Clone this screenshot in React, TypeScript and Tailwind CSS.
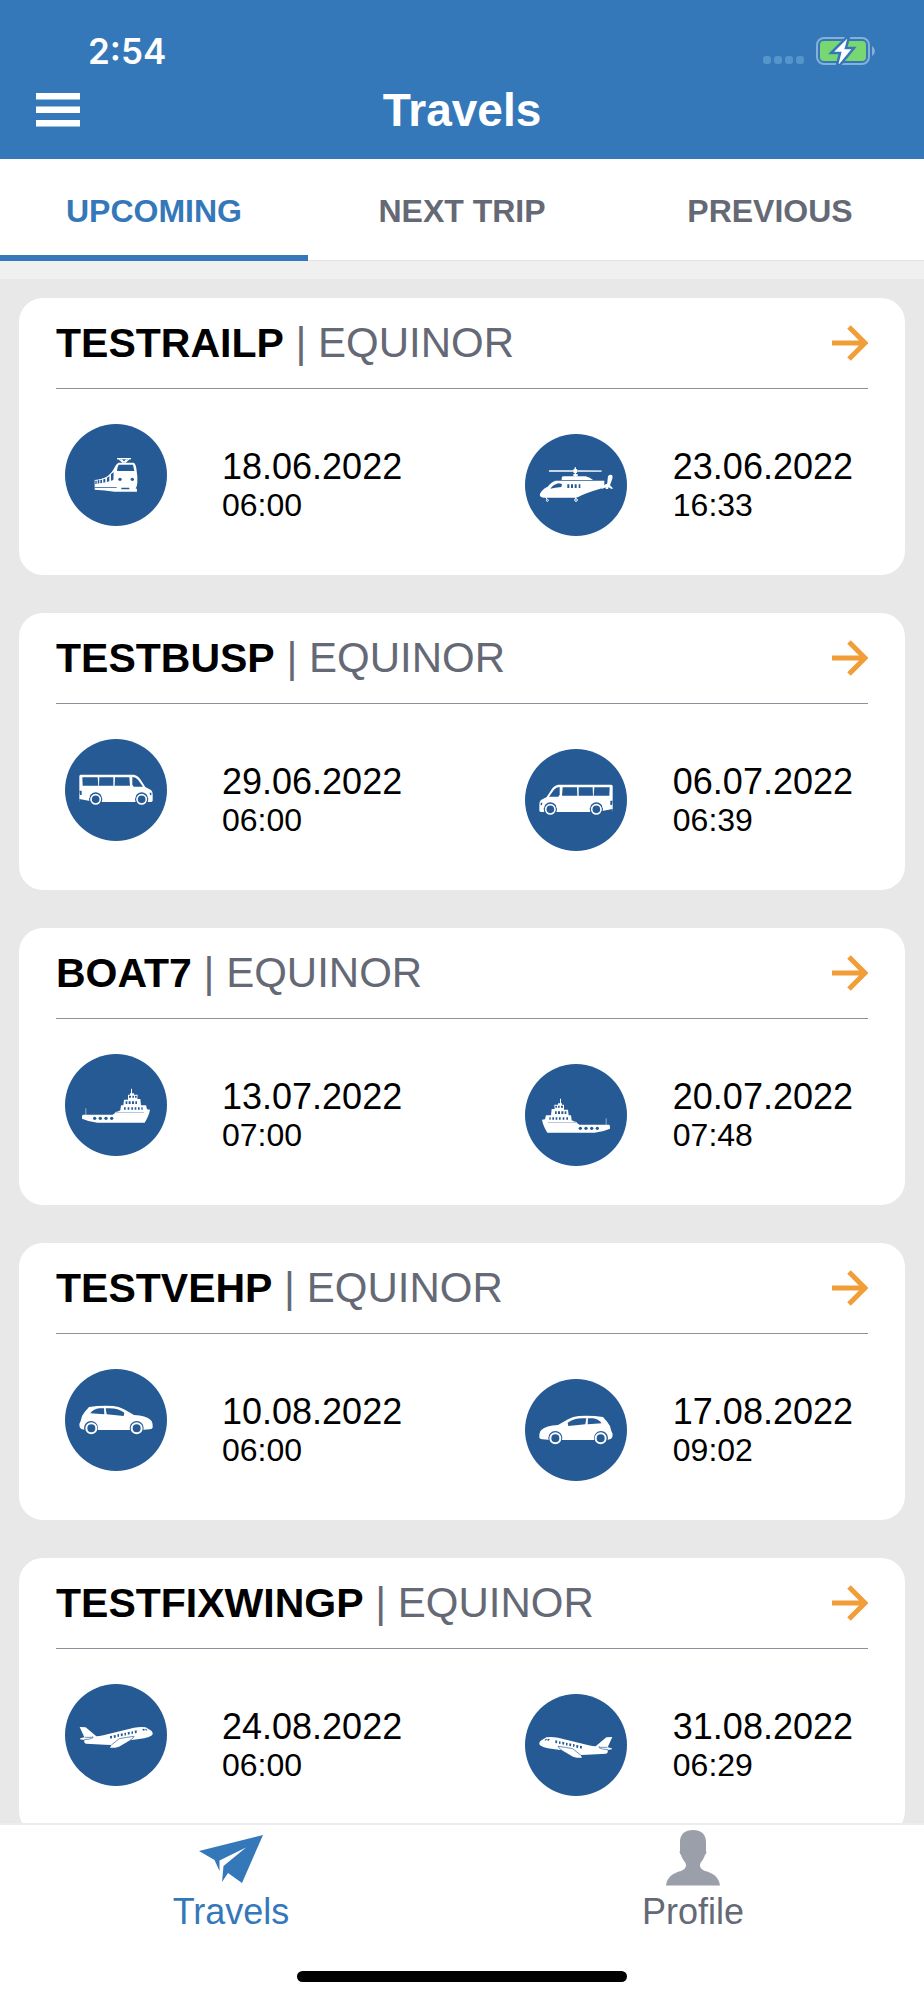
import React from "react";

type IconProps = { className?: string };

const TrainIcon = ({ className }: IconProps) => (
  <svg viewBox="45 42 306 306" className={className} aria-hidden="true">
    <g fill="none" stroke="#fff" strokeWidth="3.5">
      <path d="M201 146H243" strokeWidth="4" />
      <path d="M207 147L219 158M237 147L225 158M214 148L222 157L230 148" />
    </g>
    <path
      fill="#fff"
      d="M206 158H250Q257 160 259 175L262 200V218Q261 230 257 236H261V245H194Q164 241 134 239V210Q158 207 170 200Q186 190 196 168Q200 160 206 158Z"
    />
    <g fill="#255a94">
      <path d="M206 164H249L253 183H201Q202 171 206 164Z" />
      <circle cx="210" cy="208" r="5" />
      <circle cx="247" cy="208" r="5" />
      <path d="M183 192L191 187L190 210L183 212Z" />
      <path d="M171 203L178 199V214L171 216Z" />
      <path d="M160 208L166 206V217L160 218Z" />
      <path d="M151 210L156 209V219L151 220Z" />
      <path d="M143 211L148 210V220L143 221Z" />
      <path d="M136 212L140 212V221L136 222Z" />
      <path d="M134 231H200V233H134ZM214 233H238V238H214Z" />
    </g>
  </svg>
);

const HelicopterIcon = ({ className }: IconProps) => (
  <svg viewBox="42 42 306 306" className={className} aria-hidden="true">
    <g fill="#fff">
      <path d="M115 150H187V156H115L113 153ZM200 150L272 151V156L200 156Z" opacity=".75" />
      <circle cx="193" cy="153" r="7" />
      <path d="M191 142H195V172H191ZM187 162H200V169H187Z" />
      <path d="M155 169H224Q238 173 246 180H152V173Z" />
      <path d="M134 182H280V197L268 206Q226 218 203 230Q198 233 190 233H98Q84 231 87 221Q94 207 110 200Q122 185 134 182Z" />
      <path d="M291 169Q294 162 303 165Q306 168 304 176L297 196L306 205Q303 209 296 203L286 202L271 207Q268 203 280 196L288 190Z" />
      <path d="M284 195L289 195L292 207H284Z" />
    </g>
    <g fill="none" stroke="#fff" strokeWidth="3">
      <path d="M105 231L107 237" />
      <circle cx="109" cy="241" r="3" />
      <path d="M194 231V237" />
      <circle cx="195" cy="240" r="4" />
    </g>
    <g fill="#255a94">
      <path d="M118 206Q128 193 143 190L153 192L151 201L133 203Z" />
      <path d="M169 193H175V204H169ZM180 193H186V204H180ZM191 193H197V204H191ZM203 193H208V204H203Z" />
      <path d="M285 172L288 172L289 190L285 193Z" />
    </g>
  </svg>
);

const BusIcon = ({ className }: IconProps) => (
  <svg viewBox="45 27 306 306" className={className} aria-hidden="true">
    <path
      fill="#fff"
      d="M92 134H252Q262 136 269 145L286 171L303 180Q308 184 308 193V212Q307 216 302 216H89Q88 212 88 206V139Q88 135 92 134Z"
    />
    <g fill="#255a94">
      <path d="M97 142H143L145 167H98ZM148 142H190V167H147ZM195 142H238L240 167H194Z" />
      <path d="M247 141Q258 141 264 149L279 170H251L247 164Z" />
      <path d="M88 182H95V195H90ZM299 188L304 188L304 196L300 195Z" />
      <path d="M88 207L120 213V218H88Z" />
      <circle cx="137" cy="207" r="20" />
      <circle cx="275" cy="207" r="20" />
    </g>
    <g fill="#255a94" stroke="#fff" strokeWidth="5">
      <circle cx="137" cy="208" r="14" />
      <circle cx="275" cy="208" r="14" />
    </g>
    <path d="M117 204A20 20 0 0 1 157 204M255 204A20 20 0 0 1 295 204" fill="none" stroke="#fff" strokeWidth="2" />
  </svg>
);

const BoatIcon = ({ className }: IconProps) => (
  <svg viewBox="45 24 306 306" className={className} aria-hidden="true">
    <g fill="#fff">
      <path d="M243 128H246V142H252V146H263L262 159H271L273 178H288L291 190L300 191Q297 209 284 230H142Q118 228 96 218Q95 210 98 206H188Q194 203 197 198L205 196L211 193L213 178H220L222 161H234V146H240V142H243Z" />
      <path d="M106 187H109V207H106Z" opacity=".5" />
    </g>
    <g fill="#255a94">
      <path d="M237 149H243V155H237ZM247 149H252V155H247ZM255 149H260V155H255Z" />
      <path d="M227 166H232V174H227ZM236 166H242V174H236ZM246 166H252V174H246ZM256 166H261V174H256Z" />
      <path d="M222 184H227V191H222ZM233 184H238V191H233ZM244 184H249V191H244ZM254 184H259V191H254ZM264 184H269V191H264ZM274 184H278V191H274Z" />
      <path d="M197 199H282V200H197Z" />
      <circle cx="134" cy="217" r="5" />
      <circle cx="151" cy="217" r="5" />
      <circle cx="168" cy="217" r="5" />
      <circle cx="185" cy="217" r="5" />
    </g>
  </svg>
);

const CarIcon = ({ className }: IconProps) => (
  <svg viewBox="45 24 306 306" className={className} aria-hidden="true">
    <path
      fill="#fff"
      d="M117 138Q150 133 190 135Q206 136 222 145L252 162Q288 163 302 177Q309 184 308 200Q305 205 298 205L275 207H106Q91 205 89 198Q86 188 92 180Q94 164 104 153Z"
    />
    <g fill="#255a94">
      <path d="M121 157Q131 144 148 142L162 142L163 160Q141 159 121 157Z" />
      <path d="M167 142Q191 141 202 145Q214 149 223 155L221 165L170 160Z" />
      <circle cx="123" cy="201" r="21" />
      <circle cx="260" cy="201" r="21" />
    </g>
    <g fill="#255a94" stroke="#fff" strokeWidth="6">
      <circle cx="124" cy="202" r="15" />
      <circle cx="260" cy="202" r="15" />
    </g>
  </svg>
);

const PlaneIcon = ({ className }: IconProps) => (
  <svg viewBox="45 24 306 306" className={className} aria-hidden="true">
    <path
      fill="#fff"
      d="M89 153L107 154L139 181Q148 181 160 178L252 155Q274 151 287 154L304 164Q311 171 306 178Q298 184 283 187L240 193L207 212Q190 217 180 215L184 207L165 206L108 203Q101 201 103 192L90 190L91 187L103 184Z"
    />
    <g fill="#255a94">
      <path d="M277 159L282 158L285 163L279 164ZM285 158L290 160L292 164L287 163Z" />
      <path d="M180 180L186 179V187L181 188ZM191 178L197 177V185L192 186ZM202 175L207 174V182L203 183ZM212 173L218 172V180L213 181ZM223 171L228 170V178L224 179ZM233 169L239 167V175L234 176ZM244 167L249 166V173L245 174ZM254 164L260 163V171L255 172Z" />
    </g>
    <g fill="none" stroke="#255a94" strokeWidth="2">
      <path d="M104 184H124Q131 180 129 185Q122 190 102 191" />
      <path d="M184 207L208 188Q228 184 252 181Q249 188 240 193" />
    </g>
  </svg>
);

const ArrowIcon = () => (
  <svg viewBox="0 0 36 36" className="h-9 w-9" aria-hidden="true">
    <path d="M0 18H33M17 2L33 18L17 34" fill="none" stroke="#f19e38" strokeWidth="5" />
  </svg>
);

const BatteryIcon = () => (
  <svg viewBox="0 0 60 28" className="h-7 w-15" aria-hidden="true">
    <rect x="1" y="1" width="52" height="26" rx="7" fill="none" stroke="#86b0d8" strokeWidth="2" />
    <rect x="4" y="4" width="46" height="20" rx="4" fill="#78d770" />
    <path d="M56 9Q59 11 59 14Q59 17 56 19Z" fill="#86b0d8" />
    <path
      d="M31 0L15 16H24L21 28H24L38 11H30L33 0Z"
      fill="#fff"
      stroke="#3478ba"
      strokeWidth="2.5"
    />
  </svg>
);

const legIcons = {
  train: TrainIcon,
  helicopter: HelicopterIcon,
  bus: BusIcon,
  boat: BoatIcon,
  car: CarIcon,
  plane: PlaneIcon,
};

type LegType = keyof typeof legIcons;
type Leg = { type: LegType; date: string; time: string };
type Trip = { name: string; company: string; out: Leg; back: Leg };

const trips: Trip[] = [
  {
    name: "TESTRAILP",
    company: "EQUINOR",
    out: { type: "train", date: "18.06.2022", time: "06:00" },
    back: { type: "helicopter", date: "23.06.2022", time: "16:33" },
  },
  {
    name: "TESTBUSP",
    company: "EQUINOR",
    out: { type: "bus", date: "29.06.2022", time: "06:00" },
    back: { type: "bus", date: "06.07.2022", time: "06:39" },
  },
  {
    name: "BOAT7",
    company: "EQUINOR",
    out: { type: "boat", date: "13.07.2022", time: "07:00" },
    back: { type: "boat", date: "20.07.2022", time: "07:48" },
  },
  {
    name: "TESTVEHP",
    company: "EQUINOR",
    out: { type: "car", date: "10.08.2022", time: "06:00" },
    back: { type: "car", date: "17.08.2022", time: "09:02" },
  },
  {
    name: "TESTFIXWINGP",
    company: "EQUINOR",
    out: { type: "plane", date: "24.08.2022", time: "06:00" },
    back: { type: "plane", date: "31.08.2022", time: "06:29" },
  },
];

const tabs = ["UPCOMING", "NEXT TRIP", "PREVIOUS"];

const LegTimes = ({ leg }: { leg: Leg }) => (
  <div>
    <p className="text-4xl leading-10">{leg.date}</p>
    <p className="text-[32px] leading-9">{leg.time}</p>
  </div>
);

const TripCard = ({ trip }: { trip: Trip }) => {
  const OutIcon = legIcons[trip.out.type];
  const BackIcon = legIcons[trip.back.type];
  // the helicopter artwork already faces left
  const flip = trip.back.type === "helicopter" ? "" : "-scale-x-100";

  return (
    <article className="shrink-0 rounded-3xl bg-white px-[37px]">
      <div className="flex h-[91px] items-center justify-between border-b border-[#8f919a]">
        <h2 className="text-[42px] leading-12">
          <span className="text-[41px] font-bold">{trip.name}</span>{" "}
          <span className="text-[#656975]">| {trip.company}</span>
        </h2>
        <button type="button" aria-label={`Open ${trip.name}`}>
          <ArrowIcon />
        </button>
      </div>

      <div className="flex items-center justify-between pt-[35px] pr-[15px] pb-[29px] pl-[9px]">
        <div className="flex items-center gap-[55px]">
          <div className="mb-5 h-[102px] w-[102px] rounded-full bg-[#255a94]">
            <OutIcon className="h-full w-full" />
          </div>
          <LegTimes leg={trip.out} />
        </div>
        <div className="flex items-center gap-[46px]">
          <div className="h-[102px] w-[102px] rounded-full bg-[#255a94]">
            <BackIcon className={`h-full w-full ${flip}`} />
          </div>
          <LegTimes leg={trip.back} />
        </div>
      </div>
    </article>
  );
};

const App = () => {
  return (
    <div className="flex h-screen flex-col bg-[#e8e8e8] font-['Liberation_Sans',Arial,sans-serif] text-black">
      <header className="bg-[#3478ba] text-white">
        <div className="flex h-[83px] items-center justify-between pt-[18px] pr-12 pl-[88px]">
          <span className="font-['Inter',sans-serif] text-[35px] leading-10 font-semibold">2:54</span>
          <div className="flex items-end gap-3">
            <div className="flex gap-[3px] pb-px">
              <span className="h-2 w-2 rounded-[3px] bg-[#5596ca]" />
              <span className="h-2 w-2 rounded-[3px] bg-[#5596ca]" />
              <span className="h-2 w-2 rounded-[3px] bg-[#5596ca]" />
              <span className="h-2 w-2 rounded-[3px] bg-[#5596ca]" />
            </div>
            <BatteryIcon />
          </div>
        </div>
        <div className="grid h-[76px] grid-cols-[1fr_auto_1fr] items-start px-9">
          <button type="button" aria-label="Menu" className="mt-2 w-11">
            <svg viewBox="0 0 44 38" className="h-[38px] w-11" aria-hidden="true">
              <path d="M0 2H44V8.5H0ZM0 15.5H44V22H0ZM0 29H44V35.5H0Z" fill="#fff" />
            </svg>
          </button>
          <h1 className="text-[46px] leading-[54px] font-bold">Travels</h1>
        </div>
      </header>

      <div role="tablist" className="flex bg-white text-[32px] leading-9 font-bold">
        {tabs.map((tab, i) => (
          <button
            key={tab}
            type="button"
            role="tab"
            aria-selected={i === 0}
            className={
              i === 0
                ? "h-[102px] flex-1 border-b-[6px] border-[#3478ba] pt-2 text-[#3478ba]"
                : "h-[102px] flex-1 border-b border-[#e4e4e4] pt-[3px] text-[#656975]"
            }
          >
            {tab}
          </button>
        ))}
      </div>

      <main className="flex min-h-0 flex-1 flex-col">
        <div className="h-[18px] shrink-0 bg-[#f0f0f0]" />
        <section className="flex min-h-0 flex-1 flex-col gap-[38px] overflow-y-auto px-[19px] pt-[19px] [scrollbar-width:none]">
          {trips.map((trip) => (
            <TripCard key={trip.name} trip={trip} />
          ))}
        </section>
      </main>

      <footer className="border-t-2 border-[#ececec] bg-white pb-[18px]">
        <nav className="flex pt-[5px] text-4xl leading-10">
          <a href="#travels" className="flex flex-1 flex-col items-center gap-1.5 text-[#3478ba]">
            <svg viewBox="0 0 64 56" className="h-14 w-16" aria-hidden="true">
              <path
                d="M0 21L64 5L43 53L29 43L23 52L24.5 36L47 17.5L20.5 30.500V41L15.500 30Z"
                fill="currentColor"
              />
            </svg>
            Travels
          </a>
          <a href="#profile" className="flex flex-1 flex-col items-center gap-1.5 text-[#656975]">
            <svg viewBox="0 0 56 56" className="h-14 w-14" aria-hidden="true">
              <path
                d="M28 0C36 0 41 4 41 12V21C42 22 41 24 40 25C39 28 37 31 35.500 33C34 37 36 39 40 41C48 43 54 47 55 55.500H1C2 47 8 43 16 41C20 39 22 37 20.500 33C19 31 17 28 16 25C15 24 14 22 15 21V12C15 4 20 0 28 0Z"
                fill="#9a9fa9"
              />
            </svg>
            Profile
          </a>
        </nav>
        <div className="mx-auto mt-[39px] h-[11px] w-[330px] rounded-full bg-black" />
      </footer>
    </div>
  );
};

export default App;
